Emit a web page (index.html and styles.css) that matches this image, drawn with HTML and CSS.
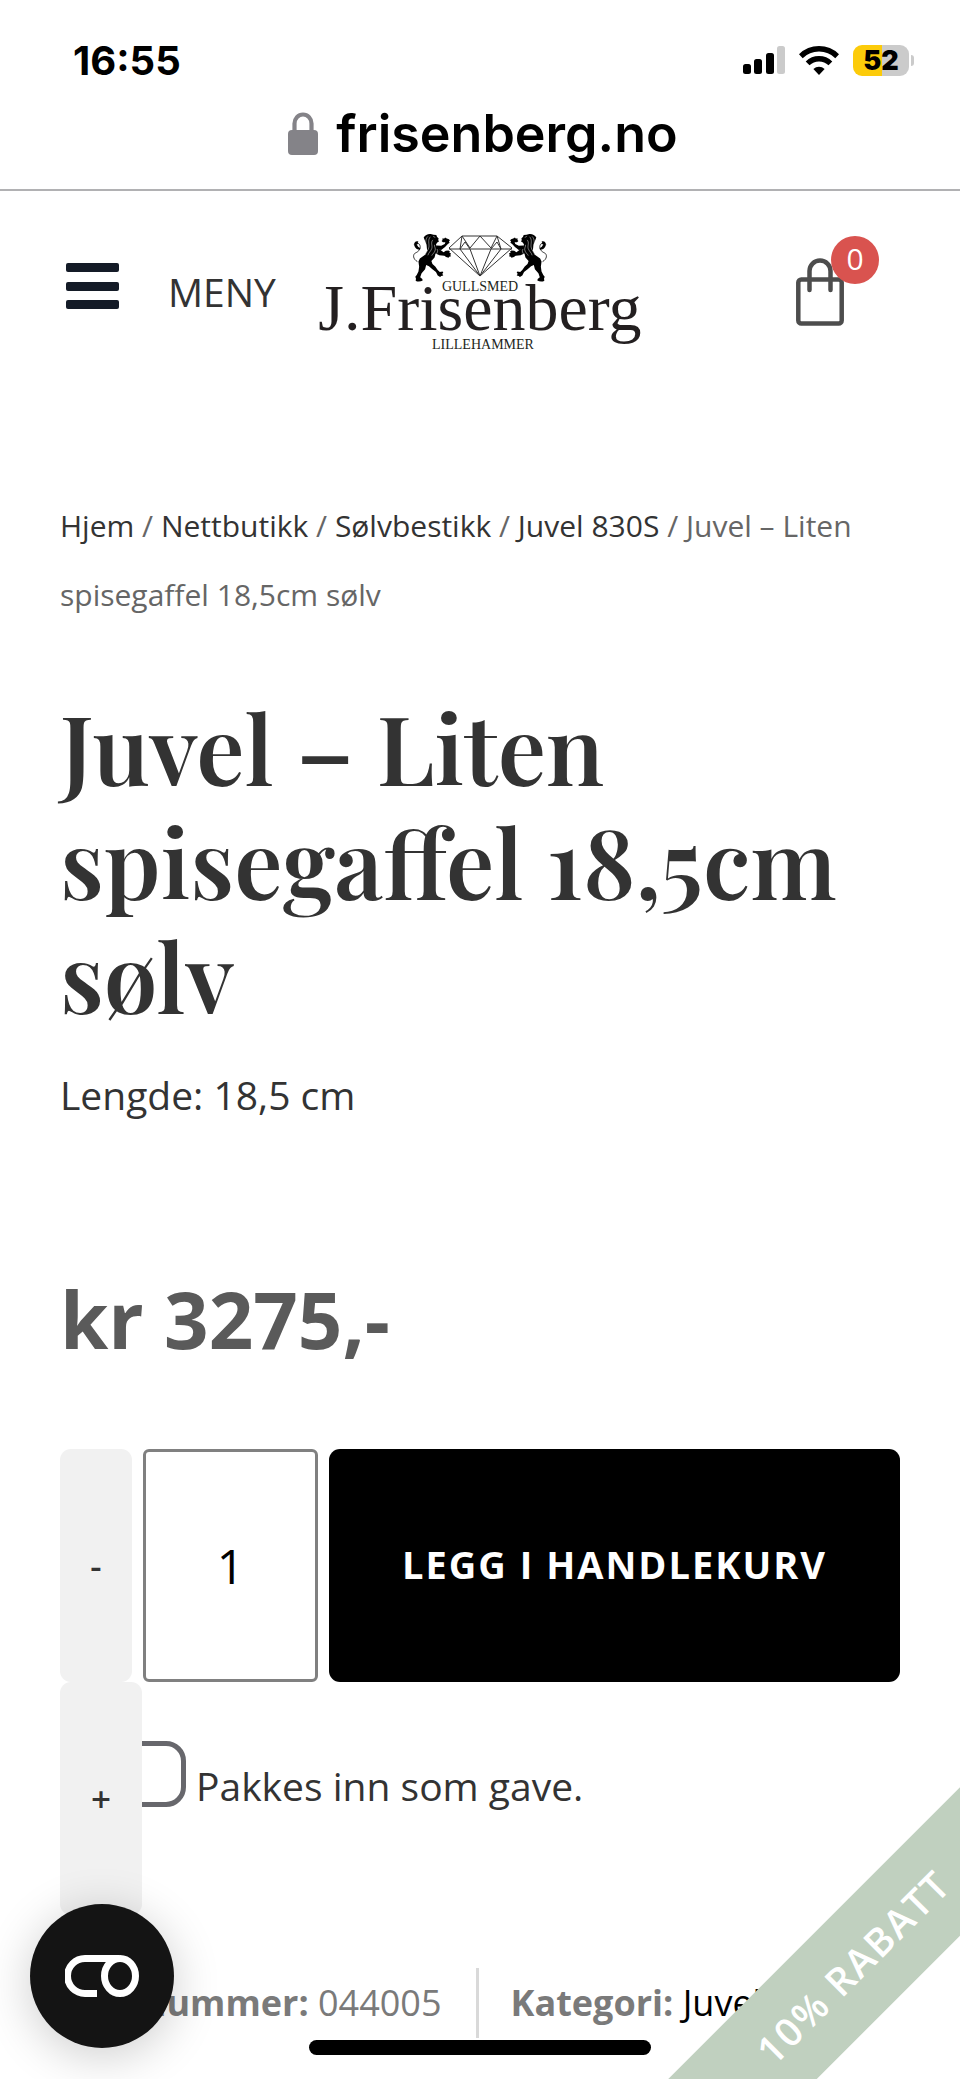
FILE: index.html
```html
<!DOCTYPE html>
<html lang="nb">
<head>
    <meta charset="UTF-8">
    <meta name="viewport" content="width=device-width, initial-scale=1.0">
    <title>Juvel – Liten spisegaffel 18,5cm sølv</title>
    <link rel="stylesheet" href="styles.css">
</head>
<body>
    <!-- Browser bar -->
    <div class="browser-bar">
        <div class="status-row">
            <span class="clock">16:55</span>
            <div class="status-icons">
                <svg width="42" height="30" viewBox="0 0 42 30" aria-hidden="true">
                    <rect x="0" y="19" width="8" height="10" rx="2.5"/>
                    <rect x="11" y="14" width="8" height="15" rx="2.5"/>
                    <rect x="23" y="8" width="8" height="21" rx="2.5"/>
                    <rect x="34" y="1" width="8" height="28" rx="2.5" fill="#cbcbcb"/>
                </svg>
                <svg width="40" height="30" viewBox="0 0 40 30" aria-hidden="true">
                    <g fill="none" stroke="#000" stroke-width="5.4">
                        <path d="M1.8 11.2a26 26 0 0 1 36.4 0"/>
                        <path d="M8.6 18.4a16.4 16.4 0 0 1 22.8 0"/>
                    </g>
                    <path d="M20 30l-5.6-6.1a8.2 8.2 0 0 1 11.2 0z"/>
                </svg>
                <div class="battery"><span>52</span></div>
            </div>
        </div>
        <div class="address-row">
            <svg width="30" height="43" viewBox="0 0 30 43" aria-hidden="true">
                <rect x="0" y="18" width="30" height="25" rx="4" fill="#848388"/>
                <path d="M6.5 20V11.5a8.5 9 0 0 1 17 0V20" fill="none" stroke="#848388" stroke-width="4.2"/>
            </svg>
            <span>frisenberg.no</span>
        </div>
    </div>

    <header class="site-header">
        <button class="menu-button" type="button">
            <svg width="53" height="46" viewBox="0 0 53 46" fill="#141b27" aria-hidden="true">
                <rect y="0" width="53" height="9" rx="2"/>
                <rect y="19" width="53" height="9" rx="2"/>
                <rect y="37" width="53" height="9" rx="2"/>
            </svg>
            <span>MENY</span>
        </button>

        <a class="logo" href="#" aria-label="J.Frisenberg">
            <svg width="330" height="126" viewBox="315 230 330 126">
                <defs>
                    <g id="lion">
                        <path d="M62 27c4-7 12-11 20-10l8 2 8 1 2 5 5 6-2 3 3 4-6 4-3 6 5 10 8 5 9 6 6-4 8-1 4 3-2 3 5 3-2 4 2 4-5 1-2 3-7-2-5-4-14-1-11-5-3 11-9 10 3 9 8 7 7 10 6 6 8-2 2 4-3 3 3 5-6 1-3 3-7-4-5-10-11-9-9-8-8-3-3 12-10 11-4 12 6 5 1 4-5 2-6 1-5 0-4-2 1-6-2-6 4-5 5-10 2-13-2-15 4-9 14-10 7-12-2-17z"/>
                        <path d="M98 50l14 1 10-5 2-5-7 0-4-4 3-3-1-4 6 0 2-3 5 3 6 2 3 4-3 2 2 4-5 4-8 8-11 9-13-2z"/>
                        <path d="M44 96c-13-7-14-21-5-25 9-4 16-12 12-22-3-8-12-8-16-2" fill="none" stroke="#000" stroke-width="2.2"/>
                        <path d="M51 62c-7 0-14-4-16-12-2-9 5-14 12-11-3 2-2 5 0 8l-5-1c2 7 6 10 10 11z"/>
                        <g fill="none" stroke="#fff" stroke-width="1.3">
                            <path d="M74 24c-9 9-5 20-6 29s-7 12-11 19"/>
                            <path d="M81 25c-8 9-3 20-4 29s-9 15-11 23"/>
                            <path d="M88 34c-7 8 0 17-3 25s-9 11-11 19"/>
                            <path d="M93 48c-2 5 5 10 1 18s-8 9-9 13"/>
                            <path d="M100 60c4 5 1 11-3 16M89 24l6 3"/>
                        </g>
                    </g>
                </defs>
                <use href="#lion" transform="translate(402 229) scale(.35)"/>
                <use href="#lion" transform="translate(558 229) scale(-.35 .35)"/>
                <g fill="none" stroke="#333" stroke-width="1" stroke-linejoin="round">
                    <path d="M462 237h35l15 12-32 28-31-28z"/>
                    <path d="M449 250h63M462 237l8 12 10-12 11 12 6-12M462 237l-2 13 20 27 21-27-4-13M470 250l10 27 11-27M470 250l-5-7-5 7M491 250l6-7 4 7"/>
                </g>
                <g class="logo-text">
                    <text class="logo-name" x="480" y="331">J.Frisenberg</text>
                    <text x="480" y="292">GULLSMED</text>
                    <text x="483" y="350">LILLEHAMMER</text>
                </g>
            </svg>
        </a>

        <a class="cart-link" href="#" aria-label="Handlekurv">
            <svg width="48" height="68" viewBox="0 0 48 68" fill="none" stroke="#4d4d4d" stroke-width="4.5" stroke-linecap="round" aria-hidden="true">
                <rect x="2.3" y="21.5" width="43.4" height="44" rx="3"/>
                <path d="M13.5 32V13a10.5 10.5 0 0 1 21 0v19"/>
            </svg>
            <span class="cart-count">0</span>
        </a>
    </header>

    <main class="product">
        <nav class="breadcrumb">
            <a href="#">Hjem</a> / <a href="#">Nettbutikk</a> / <a href="#">Sølvbestikk</a> / <a href="#">Juvel 830S</a> / Juvel – Liten spisegaffel 18,5cm sølv
        </nav>

        <h1 class="product-title">Juvel – Liten spisegaffel 18,5cm sølv</h1>
        <p class="product-length">Lengde: 18,5 cm</p>
        <p class="price">kr 3275,-</p>

        <form class="cart-form">
            <button class="qty-button" type="button">-</button>
            <input class="qty-input" type="text" inputmode="numeric" value="1" aria-label="Antall">
            <button class="add-button" type="button">LEGG I HANDLEKURV</button>
            <button class="qty-button qty-plus" type="button">+</button>
        </form>

        <div class="gift-row">
            <input class="gift-check" type="checkbox" id="gift">
            <label for="gift">Pakkes inn som gave.</label>
        </div>

        <div class="product-meta">
            <span class="sku"><b>Varenummer:</b> 044005</span>
            <span class="category"><b>Kategori:</b> <a href="#">Juvel</a></span>
        </div>
    </main>

    <!-- Floating widgets -->
    <button class="consent-button" type="button" aria-label="Cookies">
        <svg width="74" height="42" viewBox="0 0 74 42" fill="none" stroke="#fff" stroke-width="7" aria-hidden="true">
            <path d="M32 38.5H20a17.5 17.5 0 0 1 0-35h34"/>
            <ellipse cx="55" cy="21" rx="15.5" ry="17.5"/>
        </svg>
    </button>

    <div class="home-indicator"></div>

    <div class="ribbon-corner">
        <button class="ribbon" type="button">10% RABATT</button>
    </div>
</body>
</html>
```

FILE: styles.css
```css
* {
    box-sizing: border-box;
    margin: 0;
    padding: 0;
}

body {
    font-family: "Open Sans", sans-serif;
    font-size: 39px;
    color: #333;
    background: #fff;
    min-height: 100vh;
    overflow-x: hidden;
}

a {
    color: inherit;
    text-decoration: none;
}

button,
input {
    font-family: inherit;
    color: inherit;
    border: none;
}

button {
    cursor: pointer;
}

svg {
    display: block;
}

/* Browser bar */
.browser-bar {
    font-family: Inter, sans-serif;
    color: #000;
    padding: 38px 0 21px;
    border-bottom: 2px solid #b1b1b3;
}

.status-row {
    display: flex;
    justify-content: space-between;
    align-items: center;
    height: 44px;
    padding: 0 51px 0 73px;
}

.clock {
    font-size: 40px;
    font-weight: 700;
}

.status-icons {
    display: flex;
    align-items: center;
    gap: 14px;
}

.battery {
    position: relative;
    width: 56px;
    height: 31px;
    border-radius: 9px;
    background: linear-gradient(to right, #fccb0a 52%, #cbcbcb 52%);
    font-size: 27px;
    font-weight: 900;
    line-height: 31px;
    text-align: center;
}

.battery::after {
    content: "";
    position: absolute;
    top: 10px;
    right: -5px;
    width: 3px;
    height: 11px;
    border-radius: 0 3px 3px 0;
    background: #cbcbcb;
}

.address-row {
    display: flex;
    justify-content: center;
    align-items: center;
    gap: 18px;
    height: 70px;
    margin-top: 16px;
    padding-left: 6px;
    font-size: 52px;
    font-weight: 600;
}

/* Header */
.site-header {
    display: grid;
    grid-template-columns: 249px 330px 1fr;
    align-items: center;
    padding: 38px 116px 0 66px;
}

.menu-button {
    display: flex;
    align-items: flex-start;
    gap: 49px;
    background: none;
    font-size: 39px;
    line-height: 58px;
}

.logo-text {
    font-family: "Liberation Serif", serif;
    font-size: 14px;
    text-anchor: middle;
    fill: #231f20;
}

.logo-name {
    font-size: 66px;
}

.cart-link {
    position: relative;
    justify-self: end;
}

.cart-count {
    position: absolute;
    top: -22px;
    right: -35px;
    width: 48px;
    height: 48px;
    border-radius: 50%;
    background: #d9534f;
    color: #fff;
    font-size: 30px;
    line-height: 46px;
    text-align: center;
}

/* Product */
.product {
    padding: 136px 60px 0;
}

.breadcrumb {
    font-size: 30px;
    line-height: 69px;
    color: #666;
}

.breadcrumb a {
    color: #333;
}

.product-title {
    margin-top: 60px;
    font-family: "Playfair Display", "Liberation Serif", serif;
    font-size: 96px;
    font-weight: 600;
    line-height: 114px;
}

.product-length {
    margin-top: 30px;
    line-height: 68px;
}

.price {
    margin-top: 137px;
    font-size: 78px;
    font-weight: 700;
    line-height: 106px;
    color: #5a5a5a;
}

.cart-form {
    position: relative;
    display: flex;
    gap: 11px;
    height: 233px;
    margin-top: 77px;
}

.qty-button {
    width: 72px;
    border-radius: 11px;
    background: #f1f1f1;
    font-size: 35px;
    font-weight: 600;
}

/* wraps below the minus button and covers the tick box edge */
.qty-plus {
    position: absolute;
    top: 100%;
    left: 0;
    z-index: 1;
    width: 82px;
    height: 233px;
}

.qty-input {
    width: 175px;
    border: 3px solid #808080;
    border-radius: 6px;
    background: #fff;
    color: #000;
    font-size: 48px;
    text-align: center;
}

.add-button {
    flex: 1;
    padding-bottom: 4px;
    border-radius: 11px;
    background: #000;
    color: #fff;
    font-size: 38px;
    font-weight: 700;
    letter-spacing: 2px;
}

.gift-row {
    display: flex;
    align-items: flex-end;
    gap: 10px;
    margin-top: 59px;
    padding-left: 60px;
    line-height: 42px;
}

.gift-check {
    appearance: none;
    width: 66px;
    height: 66px;
    border: 5px solid #67676c;
    border-radius: 20px;
}

.product-meta {
    display: flex;
    margin-top: 161px;
    font-size: 36px;
    line-height: 70px;
    color: #7a7a7a;
    white-space: nowrap;
}

.sku {
    padding-right: 34px;
    border-right: 3px solid #d9d9d9;
}

.category {
    padding-left: 32px;
}

.category a {
    color: #000;
}

/* Floating widgets */
.consent-button {
    position: fixed;
    left: 30px;
    bottom: 31px;
    z-index: 2;
    display: flex;
    justify-content: center;
    align-items: center;
    width: 144px;
    height: 144px;
    border-radius: 50%;
    background: #141414;
    box-shadow: 0 8px 48px rgba(0, 0, 0, 0.2);
}

.home-indicator {
    position: fixed;
    left: 50%;
    bottom: 24px;
    z-index: 2;
    width: 342px;
    height: 15px;
    border-radius: 8px;
    background: #000;
    transform: translateX(-50%);
}

.ribbon-corner {
    position: fixed;
    right: 0;
    bottom: 0;
    z-index: 1;
    width: 300px;
    height: 300px;
    overflow: hidden;
}

.ribbon {
    position: absolute;
    right: -196px;
    bottom: 61px;
    width: 600px;
    height: 105px;
    padding: 0 6px 4px 0;
    background: #c0d0bf;
    color: #fff;
    font-size: 39px;
    font-weight: 600;
    letter-spacing: 2px;
    transform: rotate(-45deg);
}
```
